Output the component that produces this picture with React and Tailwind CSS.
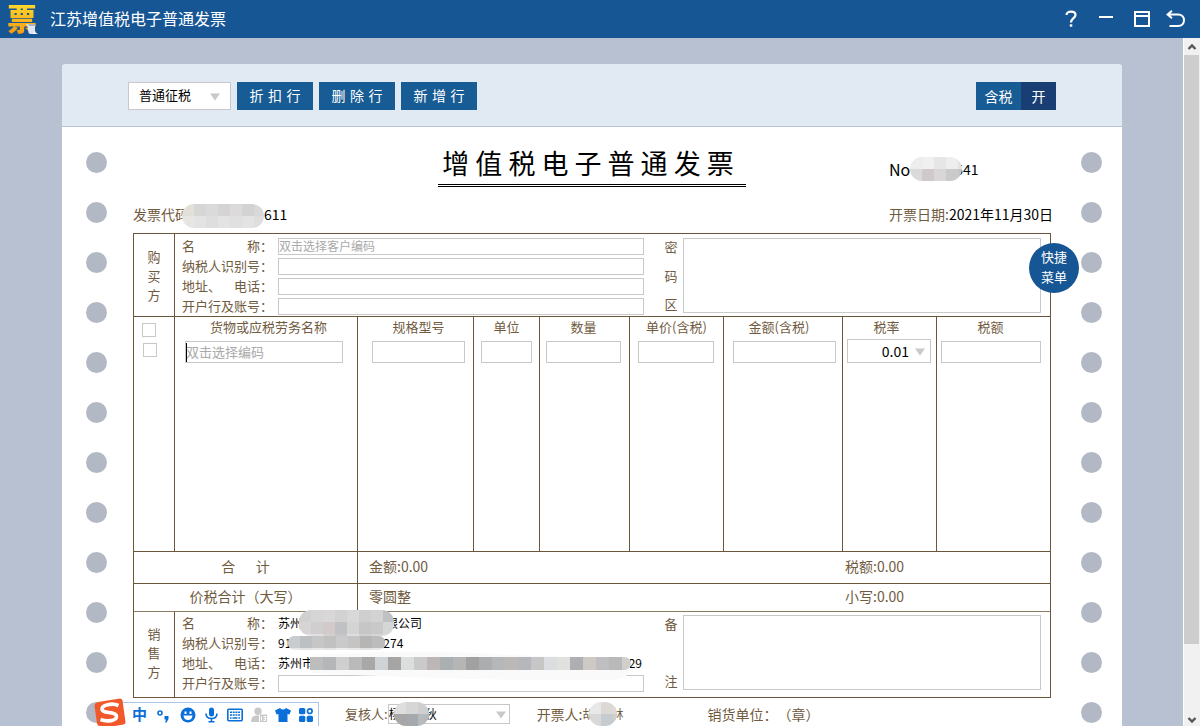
import React from "react";

const FIELD = "border border-[#c8c8c8] bg-white outline-none";

const COLUMNS = [
  { key: "name", label: "货物或应税劳务名称", col: "w-[183px]", head: "pl-[13px] pr-[8px]", pad: "pl-[10px] pr-[14px]", placeholder: "双击选择编码" },
  { key: "spec", label: "规格型号", col: "w-[116px]", head: "pl-[14px] pr-[8px]", pad: "pl-[14px] pr-[8px]" },
  { key: "unit", label: "单位", col: "w-[66px]", head: "px-0", pad: "px-[7px]" },
  { key: "qty", label: "数量", col: "w-[90px]", head: "pl-0 pr-[2px]", pad: "pl-[6px] pr-[8px]" },
  { key: "price", label: "单价(含税)", col: "w-[94px]", head: "px-0", pad: "pl-[8px] pr-[9px]" },
  { key: "amount", label: "金额(含税)", col: "w-[119px]", head: "pl-0 pr-[8px]", pad: "pl-[9px] pr-[6px]" },
  { key: "rate", label: "税率", col: "w-[94px]", head: "pl-0 pr-[6px]", pad: "pl-[4px] pr-[5px]", select: true },
  { key: "tax", label: "税额", col: "w-[114px]", head: "pl-0 pr-[6px]", pad: "pl-[4px] pr-[9px]" },
];

const DOTS = Array.from({ length: 14 }, (_, i) => i);

function Arrow({ className }) {
  return (
    <svg viewBox="0 0 10 8" className={`pointer-events-none absolute h-2 w-2.5 ${className}`}>
      <path d="M0 0.5h10L5 7.5z" fill="#c9c9c9" />
    </svg>
  );
}

function Mosaic({ rows, cell = 12, width, height, className = "" }) {
  return (
    <svg width={width} height={height} className={`shrink-0 overflow-hidden ${className}`} aria-hidden="true">
      {rows.map((row, y) =>
        row.map((fill, x) => (
          <rect key={`${x}-${y}`} x={x * cell} y={y * cell} width={cell} height={cell} fill={fill} />
        ))
      )}
    </svg>
  );
}

function TitleBar() {
  return (
    <header className="flex h-[38px] shrink-0 items-center bg-[#175694] pl-[6px] pr-[15px] text-white">
      <div className="relative h-[38px] w-8">
        <span className="block bg-gradient-to-b from-[#ffe02e] to-[#f3920a] bg-clip-text pt-px text-center font-['Liberation_Sans','Noto_Sans_CJK_SC',sans-serif] text-[30px] leading-[37px] font-black text-transparent">
          票
        </span>
        <svg viewBox="0 0 12 11" className="absolute right-0 bottom-[3px] h-[11px] w-3">
          <path d="M0 0h9v7q0 2 3 3H4Q2 9 2 6Q2 2 0 0z" fill="#dfe5ee" />
          <path d="M2 0h7v2H3z" fill="#aab4c4" />
          <path d="M9 7q0 3 3 3H5q3 0 4-3z" fill="#fff" />
        </svg>
      </div>
      <h1 className="ml-3 flex-1 pb-0.5 text-base">江苏增值税电子普通发票</h1>
      <div className="flex items-center">
        <button aria-label="帮助" className="mr-[22px]">
          <svg width="12" height="18" viewBox="0 0 12 18" fill="none" stroke="#fff" strokeWidth="2.2">
            <path d="M1.5 5C1.5 0.5 10.5 0.5 10.5 5C10.5 8 6 8.5 6 12.5" />
            <path d="M4.8 15.5h2.5" strokeWidth="2.4" />
          </svg>
        </button>
        <button aria-label="最小化" className="mr-[20px]">
          <svg width="15" height="18" viewBox="0 0 15 18">
            <path d="M0 6h14v2H0z" fill="#fff" />
          </svg>
        </button>
        <button aria-label="最大化" className="mr-[16px]">
          <svg width="16" height="16" viewBox="0 0 16 16" fill="none" stroke="#fff" strokeWidth="2">
            <path d="M1 1h14v14H1zM1 5h14" />
          </svg>
        </button>
        <button aria-label="返回">
          <svg width="19" height="18" viewBox="0 0 19 18" fill="none" stroke="#fff" strokeWidth="2">
            <path d="M6 0.8L1.5 4.5L6 8.2M1.5 4.5H12C20 4.5 20 16 12 16H3.5" />
          </svg>
        </button>
      </div>
    </header>
  );
}

function Toolbar() {
  return (
    <div className="flex items-center gap-1.5 rounded-t border-b border-[#b9c4d4] bg-[#e1e9f3] pt-[18px] pr-[66px] pb-[16px] pl-[66px] text-sm text-white">
      <div className="relative">
        <select
          aria-label="征税方式"
          className={`${FIELD} block h-7 w-[103px] appearance-none pb-0.5 pl-[10px] text-[13px] text-black`}
        >
          <option>普通征税</option>
        </select>
        <Arrow className="top-[11px] right-[11px]" />
      </div>
      {["折 扣 行", "删 除 行", "新 增 行"].map((label) => (
        <button
          key={label}
          className="h-7 w-[76px] bg-[#175c94] font-['DejaVu_Sans','Noto_Sans_CJK_SC',sans-serif]"
        >
          {label}
        </button>
      ))}
      <button className="ml-auto flex h-7 leading-7">
        <span className="w-[45px] bg-[#175c94]">含税</span>
        <span className="w-[35px] bg-[#193e73]">开</span>
      </button>
    </div>
  );
}

function Holes() {
  return (
    <div className="flex w-[21px] shrink-0 flex-col gap-[29px] pt-[25px]">
      {DOTS.map((i) => (
        <span key={i} className="size-[21px] shrink-0 rounded-full bg-[#b2b9c4]" />
      ))}
    </div>
  );
}

function VerticalText({ text, className }) {
  return (
    <div className={`flex shrink-0 flex-col items-center ${className}`}>
      {text.split("").map((c) => (
        <span key={c}>{c}</span>
      ))}
    </div>
  );
}

function PartyRow({ id, parts, placeholder, children }) {
  return (
    <div className="flex h-5 items-center">
      <label htmlFor={id} className="flex w-[91px] shrink-0 justify-between self-start leading-[19px]">
        {parts.map((p) => (
          <span key={p}>{p}</span>
        ))}
      </label>
      <div className="relative ml-[5px] flex h-[17px] min-w-0 flex-1 items-center text-xs text-black">
        {children || (
          <input
            id={id}
            placeholder={placeholder}
            className={`${FIELD} h-[17px] w-full pb-0.5 placeholder:text-[#a9a9a9]`}
          />
        )}
      </div>
    </div>
  );
}

function Party({ title, side, className, titleClass = "", rowsClass, sideClass, areaClass, children }) {
  return (
    <section className={`flex text-[13px] leading-5 ${className}`}>
      <VerticalText text={title} className={`w-10 justify-center leading-[19px] ${titleClass}`} />
      <div className="flex flex-1 border-l border-[#6b563c] pr-[9px] pl-[7px]">
        <div className={`flex-1 ${rowsClass}`}>{children}</div>
        <VerticalText text={side} className={`ml-[20px] h-[77px] w-[14px] justify-between ${sideClass}`} />
        <textarea aria-label={side} className={`${FIELD} ml-[5px] h-[75px] w-5/12 resize-none ${areaClass}`} />
      </div>
    </section>
  );
}

function Buyer() {
  return (
    <Party
      title="购买方"
      side="密码区"
      className="h-[83px] border-b border-[#6b563c]"
      rowsClass="pt-[2px]"
      sideClass="mt-[3px]"
      areaClass="mt-[4px]"
    >
      <PartyRow id="b-name" parts={["名", "称："]} placeholder="双击选择客户编码" />
      <PartyRow id="b-tax" parts={["纳税人识别号："]} />
      <PartyRow id="b-addr" parts={["地址、", "电话："]} />
      <PartyRow id="b-bank" parts={["开户行及账号："]} />
    </Party>
  );
}

function Seller() {
  return (
    <Party
      title="销售方"
      side="备注"
      className="h-[86px] border-t border-[#8b7b63]"
      titleClass="pb-[5px]"
      rowsClass="pt-[1px]"
      sideClass="mt-[2px]"
      areaClass="mt-[3px]"
    >
      <PartyRow parts={["名", "称："]}>
        <span>苏州</span>
        <Mosaic
          width={95}
          height={26}
          className="relative z-10 -ml-[3px] rounded-[12px]"
          rows={[
            ["#d0d0d0", "#d6d6d6", "#d9d7d7", "#d2d2d2", "#d8d8d8", "#cfcfcf", "#d3d3d3", "#bfc1c2"],
            ["#d6d4d4", "#cfcfd0", "#d2c9c9", "#bfc1c4", "#d4d4d4", "#c6c6c6", "#c9c9c9", "#d6d6d6"],
            ["#e4e4e4", "#e0e0e0", "#d6cfcf", "#c4c6c8", "#dedede", "#d0d0d0", "#d6d6d6", "#dcdcdc"],
          ]}
        />
        <span className="-ml-[8px]">限公司</span>
      </PartyRow>
      <PartyRow parts={["纳税人识别号："]}>
        <span>91</span>
        <Mosaic
          width={97}
          height={14}
          className="relative z-10 -ml-[3px] rounded-[6px]"
          rows={[
            ["#c9cccf", "#bcc0c3", "#c6c6c6", "#c1c1c1", "#cacaca", "#c4c4c4", "#b7b5b3", "#bcbcbc", "#b9bbba"],
            ["#e8e8e8", "#e4e4e4", "#e8e8e8", "#e4e4e4", "#eeeeee", "#e8e8e8", "#e2e2e2", "#e8e8e8", "#e6e6e6"],
          ]}
        />
        <span className="-ml-[2px]">274</span>
      </PartyRow>
      <PartyRow parts={["地址、", "电话："]}>
        <span>苏州市</span>
        <svg viewBox="0 0 322 32" className="absolute top-[-4px] left-[31px] z-[5] h-8 w-[322px]" aria-hidden="true">
          <path d="M4 4Q120 -3 200 4L310 7Q322 10 321 18Q319 29 300 29Q150 30 4 22z" fill="#fafafa" />
        </svg>
        <Mosaic
          width={321}
          height={13}
          className="relative z-10 -ml-[4px] rounded-r-[7px]"
          cell={13}
          rows={[
            [
              "#bdbdbd", "#b4b6b7", "#cfcfcf", "#bababa", "#a8a8a8", "#d0d3d6", "#a5a5a5", "#dcdede", "#cacaca",
              "#bcb6b6", "#aab0b2", "#b5b5b5", "#a1a1a1", "#abadae", "#b5b7b8", "#bdb8b8", "#b6b6bd", "#c6c6c6",
              "#dcdde0", "#e0e0dc", "#aeafb3", "#cfc9c6", "#bfbfc1", "#b9b9b9", "#d0d0ca",
            ],
          ]}
        />
        <span className="-ml-[9px]">529</span>
      </PartyRow>
      <PartyRow id="s-bank" parts={["开户行及账号："]} />
    </Party>
  );
}

function Checkbox({ label, className }) {
  return (
    <input
      type="checkbox"
      aria-label={label}
      className={`block size-[14px] appearance-none border border-[#c8c8c8] bg-white ${className}`}
    />
  );
}

function Items() {
  return (
    <table className="w-full table-fixed border-separate border-spacing-0 text-[13px]">
      <colgroup>
        <col className="w-[40px]" />
        {COLUMNS.map((c) => (
          <col key={c.key} className={c.col} />
        ))}
      </colgroup>
      <thead>
        <tr className="h-[22px] align-top">
          <th className="p-0 pt-[6px]">
            <Checkbox label="全选" className="ml-[8px]" />
          </th>
          {COLUMNS.map((c) => (
            <th key={c.key} className={`border-l border-[#6b563c] py-0 leading-[19px] font-normal ${c.head}`}>
              {c.label}
            </th>
          ))}
        </tr>
      </thead>
      <tbody>
        <tr className="h-[212px] align-top">
          <td className="p-0 pt-[4px]">
            <Checkbox label="选择行" className="ml-[9px]" />
          </td>
          {COLUMNS.map((c) => (
            <td key={c.key} className={`border-l border-[#6b563c] pb-0 ${c.select ? "pt-0" : "pt-[2px]"} ${c.pad}`}>
              <div className="relative">
                {c.select ? (
                  <>
                    <select
                      aria-label={c.label}
                      className={`${FIELD} block h-6 w-full appearance-none pr-[21px] text-sm text-black [text-align-last:right]`}
                    >
                      <option>0.01</option>
                    </select>
                    <Arrow className="top-[9px] right-[6px]" />
                  </>
                ) : (
                  <input
                    aria-label={c.label}
                    placeholder={c.placeholder}
                    className={`${FIELD} block h-[22px] w-full pb-0.5 placeholder:text-[#a9a9a9]`}
                  />
                )}
                {c.key === "name" && <span className="absolute top-[2px] left-px h-[19px] w-px bg-black" />}
              </div>
            </td>
          ))}
        </tr>
      </tbody>
      <tfoot className="text-sm">
        <tr className="h-8">
          <td colSpan={2} className="border-t border-[#6b563c] p-0 pb-[3px] text-center">
            合&emsp;&nbsp;&nbsp;计
          </td>
          <td colSpan={5} className="border-t border-l border-[#6b563c] p-0 pb-[3px] pl-[11px]">
            金额:0.00
          </td>
          <td colSpan={2} className="border-t border-[#6b563c] p-0 pb-[3px] pl-[3px]">
            税额:0.00
          </td>
        </tr>
        <tr className="h-7">
          <td colSpan={2} className="border-t border-[#6b563c] p-0 pb-[3px] text-center">
            价税合计（大写）
          </td>
          <td colSpan={5} className="border-t border-l border-[#6b563c] p-0 pb-[3px] pl-[11px]">
            零圆整
          </td>
          <td colSpan={2} className="border-t border-[#6b563c] p-0 pb-[3px] pl-[3px]">
            小写:0.00
          </td>
        </tr>
      </tfoot>
    </table>
  );
}

function InvoiceHead() {
  return (
    <>
      <div className="grid grid-cols-[1fr_auto_1fr]">
        <h2 className="col-start-2 mt-[14px] h-[46px] border-b-[3px] border-double border-black pr-3 pl-1 text-[27px] leading-[44px] whitespace-nowrap text-black">
          增 值 税 电 子 普 通 发 票
        </h2>
        <div className="mt-[30px] flex h-6 w-[162px] items-center justify-self-end text-sm text-black">
          <span className="text-base">No</span>
          <Mosaic
            width={52}
            height={24}
            className="relative z-10 rounded-full"
            rows={[
              ["#ededed", "#f0f0f0", "#e6e6e6", "#eeeeee", "#e3e3e3"],
              ["#dadada", "#cfc9c9", "#d8d6d6", "#cacaca", "#c6c6c6"],
            ]}
          />
          <span className="-ml-[7px]">541</span>
        </div>
      </div>
      <div className="mt-[16px] mb-[5px] flex h-[25px] items-start justify-between text-sm leading-[22px]">
        <div className="flex items-start">
          <span>发票代码</span>
          <Mosaic
            width={82}
            height={24}
            className="relative z-10 mt-px -ml-[7px] rounded-full"
            rows={[
              ["#e3e0da", "#d6d6d6", "#dadada", "#d4d4d4", "#dcdada", "#d3d3d3", "#d8d8d8"],
              ["#e8e6e2", "#e3e3e3", "#dedede", "#e3e3e3", "#e0e0e0", "#e3e3e3", "#dedede"],
            ]}
          />
          <span className="text-black">611</span>
        </div>
        <div className="w-[162px] whitespace-nowrap">
          开票日期:<span className="text-black">2021年11月30日</span>
        </div>
      </div>
    </>
  );
}

function Signatures() {
  return (
    <div className="flex h-[32px] items-center pl-[212px] text-sm whitespace-nowrap">
      <label htmlFor="reviewer" className="text-[13px]">复核人:</label>
      <div className="relative">
        <select id="reviewer" className={`${FIELD} block h-5 w-[122px] appearance-none text-xs text-black`}>
          <option>杨&emsp;&emsp;秋</option>
        </select>
        <Arrow className="top-[7px] right-[4px]" />
        <Mosaic
          width={35}
          height={24}
          className="absolute -top-[2px] left-[6px] rounded-full"
          rows={[
            ["#dedede", "#d6d6d6", "#cfcfcf"],
            ["#a8a6a6", "#a4a9ad", "#b6babd"],
          ]}
        />
      </div>
      <div className="ml-[27px] flex items-center">
        开票人:<span className="text-xs">胡</span>
        <Mosaic
          width={28}
          height={24}
          className="relative z-10 -ml-[6px] rounded-full"
          rows={[
            ["#e8e8e8", "#dcd8d3", "#dedad6"],
            ["#d8d8d8", "#c6cbd0", "#cfd0d0"],
          ]}
        />
        <span className="-ml-[5px] text-xs">林</span>
      </div>
      <span className="ml-[84px] [text-spacing-trim:space-all]">销货单位：（章）</span>
    </div>
  );
}

function ScrollBar() {
  return (
    <div className="flex w-[17px] shrink-0 flex-col border-l border-white bg-[#f1f1f1]">
      <svg viewBox="0 0 16 17" className="h-[17px] w-4 shrink-0">
        <path d="M4.5 11L8 7.5L11.5 11" fill="none" stroke="#555" strokeWidth="2.4" />
      </svg>
      <div className="flex-1">
        <div className="mr-px h-[90%] bg-[#cdcdcd]" />
      </div>
      <svg viewBox="0 0 16 17" className="h-[17px] w-4 shrink-0">
        <path d="M4.5 9L8 12.5L11.5 9" fill="none" stroke="#555" strokeWidth="2.4" />
      </svg>
    </div>
  );
}

// Floating input-method bar, sits over the page like a desktop widget
function ImeBar() {
  return (
    <div className="absolute bottom-0 left-[94px] z-20 flex h-[28px] items-end text-[#0a6fd8]">
      <svg width="32" height="28" viewBox="0 0 32 28" className="relative z-10 -mr-[4px]">
        <path d="M4 4L26 0.5Q28 0.5 28.5 2.5L31.5 24Q31.5 26 29.5 26.5L21 28H6Q3.5 28 3 25.5L0.5 8Q0.5 5 4 4z" fill="#f1592a" />
        <path
          d="M24.5 7.5C18 4.5 7.5 7 8 11.5C8.5 16 22.5 13 22.5 18.5C22.5 23 13 24 6.5 21.5"
          fill="none"
          stroke="#fff"
          strokeWidth="3.6"
        />
      </svg>
      <div className="flex h-6 items-center gap-[8px] border-t border-r border-[#a9c6e6] bg-white pr-[5px] pl-[10px]">
        <span className="pb-0.5 text-[15px] leading-4 font-bold">中</span>
        <svg width="17" height="16" viewBox="0 0 17 16">
          <circle cx="5" cy="6" r="2" fill="none" stroke="currentColor" strokeWidth="1.6" />
          <path d="M9.5 9h4v3l-2 3.5h-1.5l1-3h-1.5z" fill="currentColor" />
        </svg>
        <svg width="16" height="16" viewBox="0 0 16 16">
          <circle cx="8" cy="8" r="7.5" fill="currentColor" />
          <path d="M4.5 4.5h2v2.5h-2zM9.5 4.5h2v2.5h-2zM3.5 8.5h9q-0.5 4.5-4.5 4.5t-4.5-4.5z" fill="#fff" />
        </svg>
        <svg width="15" height="16" viewBox="0 0 15 16">
          <rect x="5" y="0.5" width="5" height="9" rx="2.5" fill="currentColor" />
          <path d="M2 6.5q0 5 5.5 5t5.5-5M7.5 11.5v3M4.5 14.8h6" fill="none" stroke="currentColor" strokeWidth="1.6" />
        </svg>
        <svg width="16" height="14" viewBox="0 0 16 14">
          <rect x="0.8" y="1.3" width="14.4" height="11.4" rx="1" fill="none" stroke="currentColor" strokeWidth="1.6" />
          <path d="M3 4.3h10M3 7h10" stroke="currentColor" strokeWidth="1.6" strokeDasharray="2 0.7" />
          <path d="M3 10h1.5M5.5 10h5M11.5 10H13" stroke="currentColor" strokeWidth="1.4" />
        </svg>
        <svg width="16" height="16" viewBox="0 0 16 16" fill="#c9c9c9">
          <circle cx="7" cy="4.2" r="3.7" />
          <path d="M0 15q0-6.5 5-6.5h3v6.5z" />
          <path d="M9 7.5h7v7.5H9z" />
          <path d="M10.5 9.5v4M12.5 9.5h2v4h-2M12.5 11.5h2" fill="none" stroke="#fff" />
        </svg>
        <svg width="16" height="16" viewBox="0 0 16 16" fill="currentColor">
          <path d="M5 1q3 3 6 0l5 2.5-1.5 4-2-.5v8h-9V7l-2 .5L0 3.5z" />
        </svg>
        <svg width="14" height="14" viewBox="0 0 14 14" fill="currentColor">
          <rect width="6.3" height="6.3" rx="1.5" />
          <circle cx="10.8" cy="3.2" r="2.3" fill="none" stroke="currentColor" strokeWidth="1.7" />
          <rect y="7.7" width="6.3" height="6.3" rx="1.5" />
          <rect x="7.7" y="7.7" width="6.3" height="6.3" rx="1.5" />
        </svg>
      </div>
    </div>
  );
}

export default function App() {
  return (
    <div className="relative flex h-screen flex-col overflow-hidden bg-[#b8c1d1] font-['Noto_Sans_CJK_SC',sans-serif] text-[#715b3f]">
      <TitleBar />
      <div className="flex min-h-0 flex-1">
        <main className="min-w-0 flex-1 overflow-hidden pt-[26px] pr-[61px] pl-[62px]">
          <div className="rounded-t bg-white">
            <Toolbar />
            <div className="flex pr-[20px] pl-[24px]">
              <Holes />
              <div className="mr-[30px] ml-[26px] min-w-0 flex-1">
                <InvoiceHead />
                <div className="relative border border-[#6b563c]">
                  <Buyer />
                  <Items />
                  <Seller />
                  <button className="absolute top-[9px] -right-[29px] z-10 size-[50px] rounded-full bg-[#175694] px-3 pb-0.5 text-[13px] leading-5 text-white">
                    快捷菜单
                  </button>
                </div>
                <Signatures />
              </div>
              <Holes />
            </div>
          </div>
        </main>
        <ScrollBar />
      </div>
      <ImeBar />
    </div>
  );
}
